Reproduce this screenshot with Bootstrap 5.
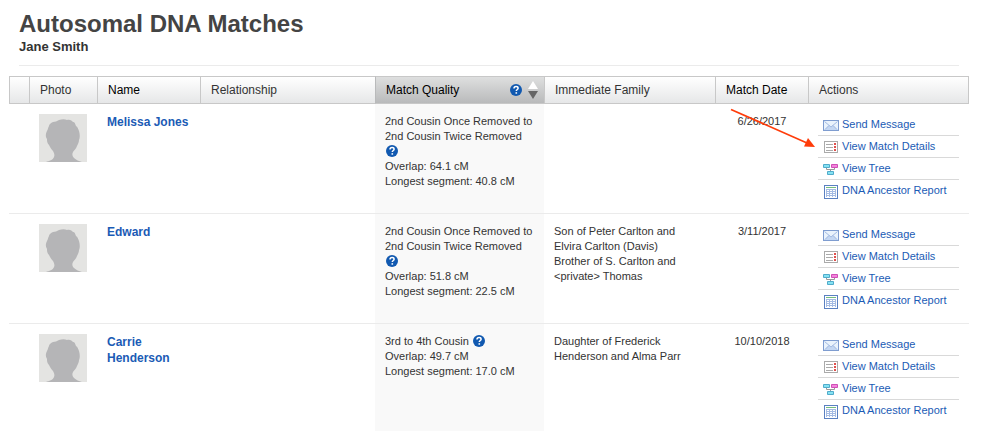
<!DOCTYPE html>
<html lang="en">
<head>
<meta charset="utf-8">
<meta name="viewport" content="width=device-width, initial-scale=1">
<title>Autosomal DNA Matches</title>
<link rel="stylesheet" href="https://cdn.jsdelivr.net/npm/bootstrap@5.3.0/dist/css/bootstrap.min.css">
<style>
  body { font-family: "Liberation Sans", Arial, sans-serif; font-size: 11px; line-height: 15px; color: #333; background: #fff; }
  a { color: #1b5bb5; text-decoration: none; }
  a:hover { text-decoration: underline; }
  .page { padding: 9px 16px 0 9px; }
  .page-head { margin: 0 10px 10px 10px; padding-bottom: 10px; border-bottom: 1px solid #ebebeb; }
  .page-head h1 { font-size: 24px; line-height: 30px; font-weight: bold; color: #444; }
  .page-head p { font-size: 13px; line-height: 16px; font-weight: bold; color: #333; }
  .matches { table-layout: fixed; border-collapse: separate; border-spacing: 0; }
  .matches th { height: 28px; padding: 0 0 0 10px; font-size: 12px; line-height: 16px; font-weight: normal;
    border: solid #c8c8c8; border-width: 1px 0 1px 1px; background: linear-gradient(#fff, #e6e7e8); }
  .matches th:last-child { border-right-width: 1px; }
  .matches th a { color: #000; }
  .matches th.sorted { background: linear-gradient(#dedfdf, #b9babb); padding-right: 4px; border-left-color: #b9babb; }
  .matches td { padding: 10px 9px 11px 10px; border-bottom: 1px solid #ebebeb; vertical-align: top; }
  .matches tr:last-child td { border-bottom: 0; padding-bottom: 9px; }
  .matches td.quality { background: #f9f9f9; }
  .matches td.family { padding-right: 16px; }
  .person { font-size: 12px; line-height: 16px; font-weight: bold; }
  .help { padding: 0; border: 0; background: none; width: 12px; height: 12px; line-height: 0; vertical-align: middle; }
  td .help { margin: 0 0 2px 1px; }
  .sort { padding: 0; border: 0; background: none; line-height: 0; }
  .actions { margin-right: 1px; }
  .actions li { height: 22px; padding-left: 5px; border-bottom: 1px solid #d9d9d9; }
  .actions li:last-child { border-bottom: 0; }
  .actions a { gap: 3px; line-height: 21px; white-space: nowrap; }
  .pointer { left: 15px; top: 3px; z-index: 2; pointer-events: none; }
  .c-mark { width: 20px; } .c-photo { width: 68px; } .c-name { width: 103px; }
  .c-quality { width: 169px; } .c-family { width: 171px; } .c-date { width: 93px; } .c-actions { width: 161px; }
</style>
</head>
<body>
<svg class="d-none" aria-hidden="true">
  <symbol id="avatar" viewBox="0 0 48 48">
    <rect width="48" height="48" fill="#e4e4e2"/>
    <path fill="#b5b5b7" d="M7 48C10 47 14 46 15 43C16 41 15 39 14 37C12 35 11 33 10 31C8 29 8 27 8 25C6 22 7 19 8 17C9 15 9 14 10 12C10 10 12 9 14 8C16 8 18 7 20 6C23 5 26 5 28 6C31 5 33 7 34 8C36 8 36 10 37 12C39 13 39 15 40 17C41 20 41 24 40 26C40 28 39 30 38 32C37 35 35 36 34 38C33 40 33 42 35 44C37 46 40 47 43 48Z"/>
  </symbol>
  <symbol id="help" viewBox="0 0 12 12">
    <circle cx="6" cy="6" r="6" fill="#1159b0"/>
    <path d="M4 4.600C4 3.300 4.900 2.600 6.100 2.600S8.100 3.300 8.100 4.300C8.100 5.500 6.300 5.600 6.300 7.100" fill="none" stroke="#fff" stroke-width="1.500"/>
    <path d="M5.500 8.200h1.600v1.500H5.500z" fill="#fff"/>
  </symbol>
  <symbol id="mail" viewBox="0 0 16 22">
    <rect x=".5" y="6.500" width="15" height="10" fill="#eaf3fc" stroke="#7f9dd0"/>
    <path d="M1 16l5-5 2 2 2-2 5 5z" fill="#c4d7f2"/>
    <path d="M1.500 7.500L8 13l6.500-5.500M2 15.500L6 11.500M14 15.500l-4-4" fill="none" stroke="#a3bbe2"/>
  </symbol>
  <symbol id="details" viewBox="0 0 16 22">
    <rect x="1.500" y="5.500" width="13" height="11" fill="#fff" stroke="#aaa"/>
    <path d="M3 8.500h7M3 11.500h7M3 14.500h7" stroke="#aaa"/>
    <path d="M11 7h2v2h-2zM11 10h2v2h-2zM11 13h2v2h-2z" fill="#e0504c"/>
  </symbol>
  <symbol id="tree" viewBox="0 0 16 22">
    <path d="M3.500 10v1.500h8V10M7.500 11.500V14" fill="none" stroke="#999"/>
    <path d="M.5 6.500h6v3h-6zM4.500 13.500h6v3h-6z" fill="#86e2f2" stroke="#50abcb"/>
    <path d="M8.500 6.500h6v3h-6z" fill="#f284dc" stroke="#d04fb5"/>
  </symbol>
  <symbol id="report" viewBox="0 0 16 22">
    <rect x="1.500" y="5.500" width="13" height="13" fill="#fff" stroke="#5a80c2"/>
    <path d="M3 7.500h10" stroke="#74bd80"/>
    <path d="M3 9h10v8H3z" fill="#a4bbe3"/>
    <path d="M4 10h2v1H4zM7 10h2v1H7zM10 10h2v1h-2zM4 12h2v1H4zM7 12h2v1H7zM10 12h2v1h-2zM4 14h2v1H4zM7 14h2v1H7zM10 14h2v1h-2zM4 16h2v1H4zM7 16h2v1H7zM10 16h2v1h-2z" fill="#fff"/>
  </symbol>
</svg>

<main class="page">
  <header class="page-head">
    <h1 class="mb-0">Autosomal DNA Matches</h1>
    <p class="mb-0">Jane Smith</p>
  </header>

  <table class="matches w-100">
    <colgroup>
      <col class="c-mark"><col class="c-photo"><col class="c-name"><col>
      <col class="c-quality"><col class="c-family"><col class="c-date"><col class="c-actions">
    </colgroup>
    <thead>
      <tr>
        <th></th>
        <th scope="col">Photo</th>
        <th scope="col"><a href="#">Name</a></th>
        <th scope="col">Relationship</th>
        <th scope="col" class="sorted">
          <div class="d-flex align-items-center">
            <a href="#" class="me-auto">Match Quality</a>
            <button type="button" class="help me-1" aria-label="About match quality"><svg width="12" height="12"><use href="#help"/></svg></button>
            <button type="button" class="sort" aria-label="Sort by match quality"><svg width="14" height="18" viewBox="0 0 14 18"><path d="M7 0l5 8H2z" fill="#fff"/><path d="M2 10h10l-5 8z" fill="#666"/></svg></button>
          </div>
        </th>
        <th scope="col">Immediate Family</th>
        <th scope="col"><a href="#">Match Date</a></th>
        <th scope="col">Actions</th>
      </tr>
    </thead>
    <tbody>
      <tr>
        <td></td>
        <td><svg class="d-block" width="48" height="48" role="img" aria-label="No photo"><use href="#avatar"/></svg></td>
        <td><a href="#" class="person d-block">Melissa Jones</a></td>
        <td></td>
        <td class="quality">2nd Cousin Once Removed to 2nd Cousin Twice Removed <button type="button" class="help" aria-label="Help"><svg width="12" height="12"><use href="#help"/></svg></button><br>Overlap: 64.1 cM<br>Longest segment: 40.8 cM</td>
        <td class="family"></td>
        <td class="text-center position-relative">6/26/2017
          <svg class="pointer position-absolute" width="102" height="44" viewBox="0 0 102 44" aria-hidden="true"><path d="M1 2.500L77 36" stroke="#ff3c0a" stroke-width="1.700"/><path d="M85 40l-11-.5L78 31z" fill="#ff3c0a"/></svg>
        </td>
        <td>
          <ul class="actions list-unstyled mb-0">
            <li><a href="#" class="d-flex"><svg width="16" height="22"><use href="#mail"/></svg>Send Message</a></li>
            <li><a href="#" class="d-flex"><svg width="16" height="22"><use href="#details"/></svg>View Match Details</a></li>
            <li><a href="#" class="d-flex"><svg width="16" height="22"><use href="#tree"/></svg>View Tree</a></li>
            <li><a href="#" class="d-flex"><svg width="16" height="22"><use href="#report"/></svg>DNA Ancestor Report</a></li>
          </ul>
        </td>
      </tr>
      <tr>
        <td></td>
        <td><svg class="d-block" width="48" height="48" role="img" aria-label="No photo"><use href="#avatar"/></svg></td>
        <td><a href="#" class="person d-block">Edward</a></td>
        <td></td>
        <td class="quality">2nd Cousin Once Removed to 2nd Cousin Twice Removed <button type="button" class="help" aria-label="Help"><svg width="12" height="12"><use href="#help"/></svg></button><br>Overlap: 51.8 cM<br>Longest segment: 22.5 cM</td>
        <td class="family">Son of Peter Carlton and Elvira Carlton (Davis)<br>Brother of S. Carlton and &lt;private&gt; Thomas</td>
        <td class="text-center">3/11/2017</td>
        <td>
          <ul class="actions list-unstyled mb-0">
            <li><a href="#" class="d-flex"><svg width="16" height="22"><use href="#mail"/></svg>Send Message</a></li>
            <li><a href="#" class="d-flex"><svg width="16" height="22"><use href="#details"/></svg>View Match Details</a></li>
            <li><a href="#" class="d-flex"><svg width="16" height="22"><use href="#tree"/></svg>View Tree</a></li>
            <li><a href="#" class="d-flex"><svg width="16" height="22"><use href="#report"/></svg>DNA Ancestor Report</a></li>
          </ul>
        </td>
      </tr>
      <tr>
        <td></td>
        <td><svg class="d-block" width="48" height="48" role="img" aria-label="No photo"><use href="#avatar"/></svg></td>
        <td><a href="#" class="person d-block">Carrie Henderson</a></td>
        <td></td>
        <td class="quality">3rd to 4th Cousin <button type="button" class="help" aria-label="Help"><svg width="12" height="12"><use href="#help"/></svg></button><br>Overlap: 49.7 cM<br>Longest segment: 17.0 cM</td>
        <td class="family">Daughter of Frederick Henderson and Alma Parr</td>
        <td class="text-center">10/10/2018</td>
        <td>
          <ul class="actions list-unstyled mb-0">
            <li><a href="#" class="d-flex"><svg width="16" height="22"><use href="#mail"/></svg>Send Message</a></li>
            <li><a href="#" class="d-flex"><svg width="16" height="22"><use href="#details"/></svg>View Match Details</a></li>
            <li><a href="#" class="d-flex"><svg width="16" height="22"><use href="#tree"/></svg>View Tree</a></li>
            <li><a href="#" class="d-flex"><svg width="16" height="22"><use href="#report"/></svg>DNA Ancestor Report</a></li>
          </ul>
        </td>
      </tr>
    </tbody>
  </table>
</main>
<script src="https://cdn.jsdelivr.net/npm/bootstrap@5.3.0/dist/js/bootstrap.bundle.min.js"></script>
</body>
</html>
